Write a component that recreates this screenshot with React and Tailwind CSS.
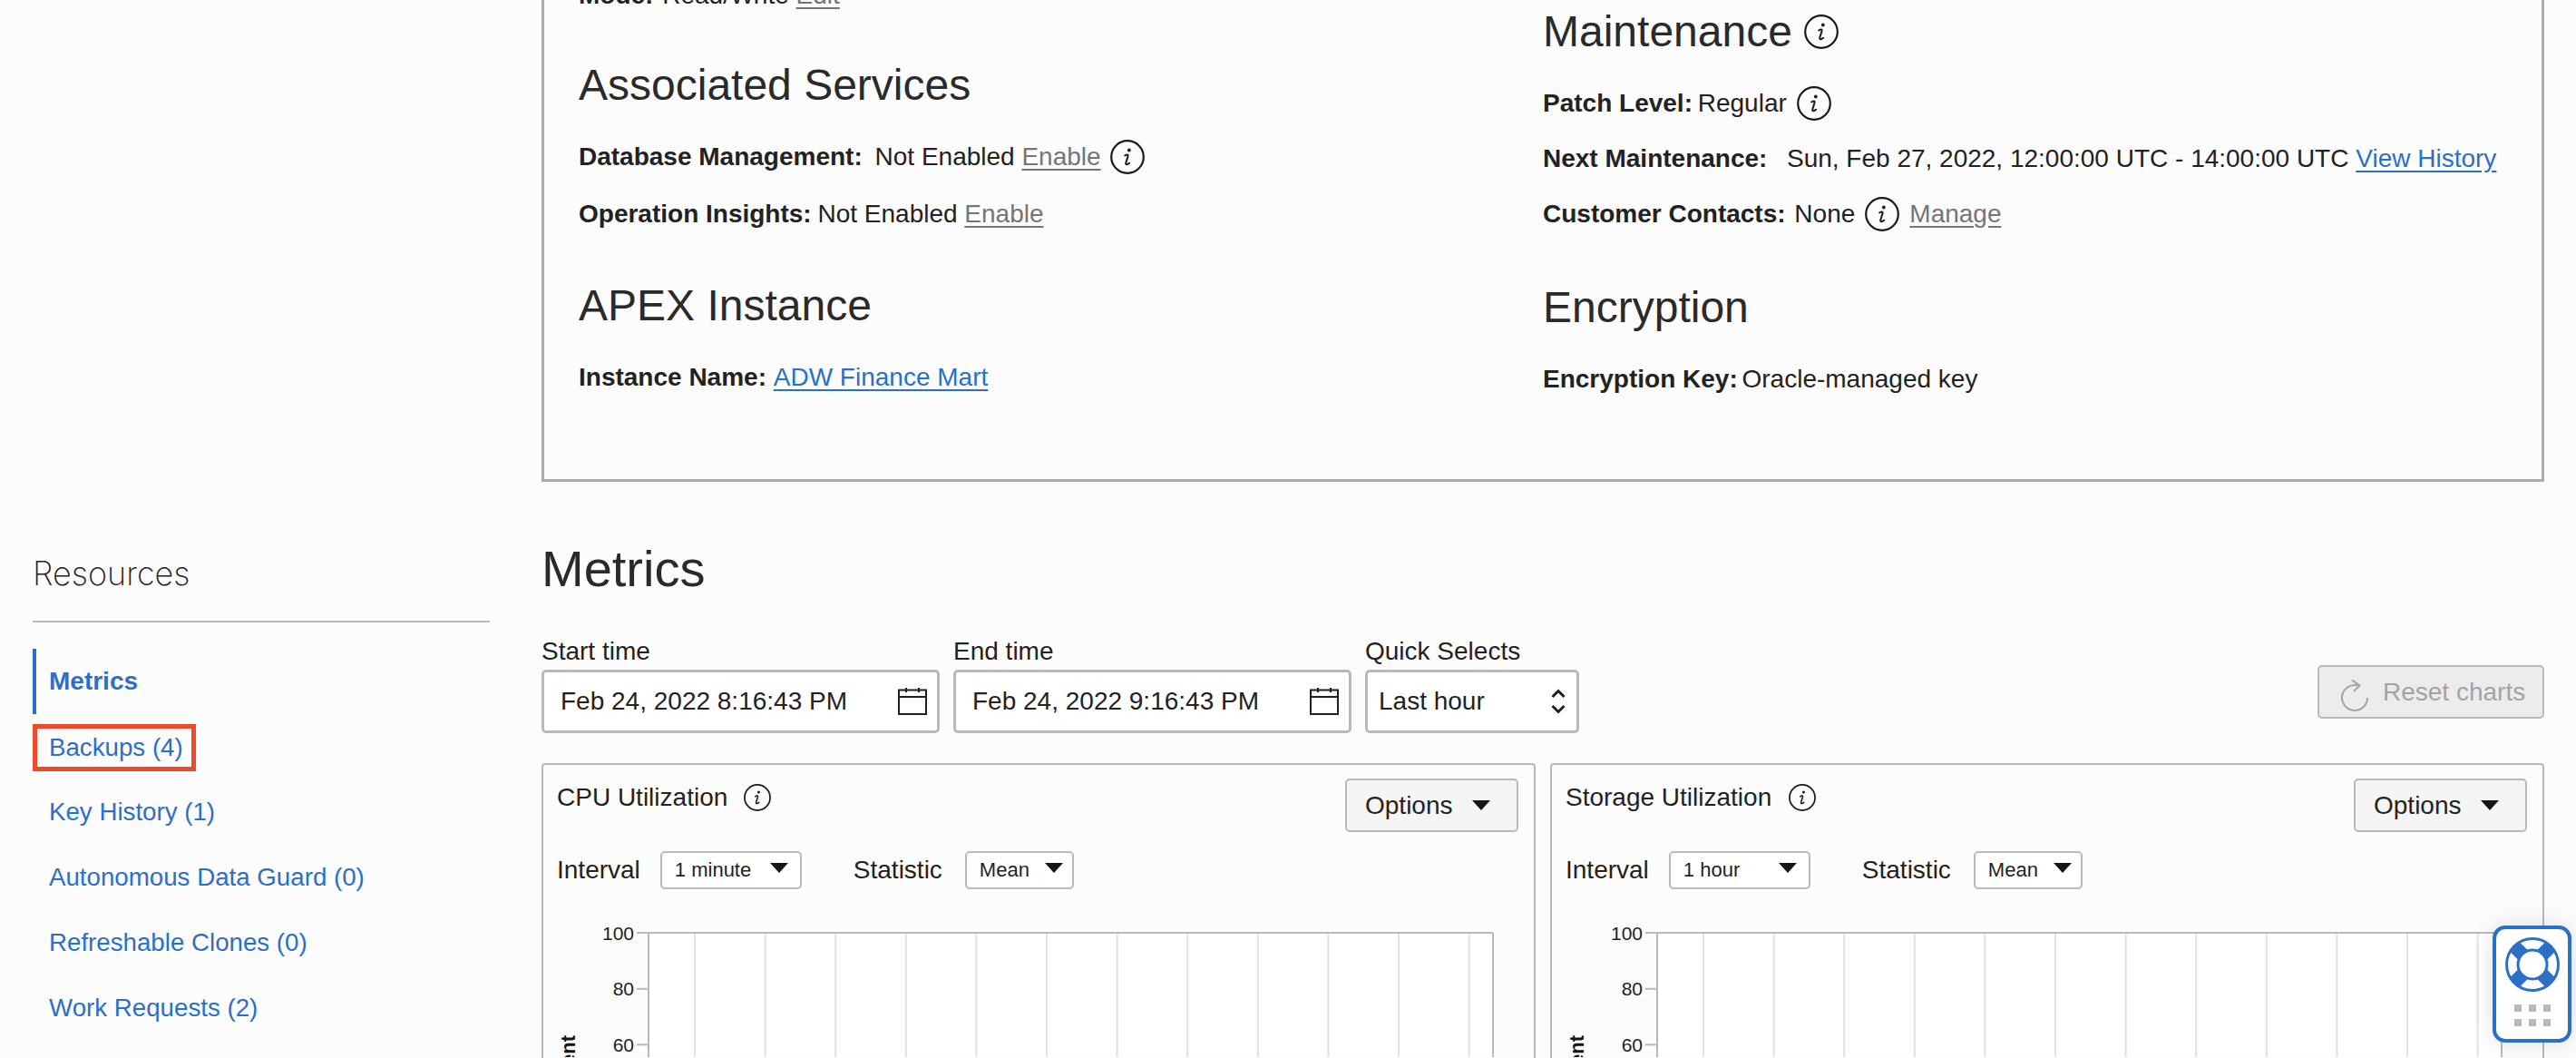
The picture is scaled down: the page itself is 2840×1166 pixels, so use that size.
const ink = "text-[#222222]";

function InfoIcon({ size = 38, className = "" }) {
  return (
    <svg width={size} height={size} viewBox="0 0 38 38" fill="none" className={`shrink-0 ${className}`}>
      <circle cx="19" cy="19" r="17.8" stroke="#1a1a1a" strokeWidth="2.2" />
      <circle cx="20.8" cy="11.5" r="1.9" fill="#1a1a1a" />
      <path d="M16.2 17.5c1.3-1 3-1.6 3.4-.5.5 1.3-2.7 7.7-2.4 9.6.2 1.2 2.200 .6 3.900-.9" stroke="#1a1a1a" strokeWidth="2" strokeLinecap="round" />
    </svg>
  );
}

function Caret({ className = "" }) {
  return (
    <svg width="20" height="11" viewBox="0 0 20 11" className={`shrink-0 ${className}`}>
      <path d="M0 0H20L10 11Z" fill="#161513" />
    </svg>
  );
}

function CalendarIcon() {
  return (
    <svg width="32" height="30" viewBox="0 0 32 30" fill="none" className="shrink-0">
      <path d="M1 2.500H31V29H1Z M1 10H31 M9 0V5 M23 0V5" stroke="#1f1f1f" strokeWidth="2" />
    </svg>
  );
}

function Row({ className = "", children }) {
  return <div className={`flex h-10 items-center whitespace-pre text-[28px] leading-10 ${ink} ${className}`}>{children}</div>;
}

function Heading({ className = "", children }) {
  return <h2 className={`flex h-14 items-center text-[48px] leading-14 font-normal text-[#2a2a2a] ${className}`}>{children}</h2>;
}

function GreyLink({ children }) {
  return <a className="text-[#757575] underline underline-offset-4">{children}</a>;
}

function BlueLink({ children }) {
  return <a className="text-[#2b6fc9] underline underline-offset-4">{children}</a>;
}

function DetailsBox() {
  return (
    <section className="flex h-[531px] overflow-hidden border-r-[3px] border-b-[3px] border-l-[3px] border-[#ababab]">
      <div className="w-[1101px] shrink-0 pl-[38px]">
        <Row className="mt-[-25px]"><b className="mr-[2px]">Mode:</b> Read/Write <GreyLink>Edit</GreyLink></Row>
        <Heading className="mt-[51px]">Associated Services</Heading>
        <Row className="mt-[31px]">
          <b className="mr-[6px]">Database Management:</b> Not Enabled <GreyLink>Enable</GreyLink>
          <InfoIcon className="ml-[10px]" />
        </Row>
        <Row className="mt-[23px]"><b className="mr-[-1px]">Operation Insights:</b> Not Enabled <GreyLink>Enable</GreyLink></Row>
        <Heading className="mt-[53px]">APEX Instance</Heading>
        <Row className="mt-[31px]"><b>Instance Name:</b>{"\u00a0"}<BlueLink>ADW Finance Mart</BlueLink></Row>
      </div>
      <div className="flex-1">
        <Heading className="mt-[7px]">Maintenance<InfoIcon className="ml-[13px]" /></Heading>
        <Row className="mt-[31px]"><b className="mr-[-2px]">Patch Level:</b> Regular<InfoIcon className="ml-[11px]" /></Row>
        <Row className="mt-[21px]"><b className="mr-[6px]">Next Maintenance:</b>{"\u00a0 "}Sun, Feb 27, 2022, 12:00:00 UTC - 14:00:00 UTC <BlueLink>View History</BlueLink></Row>
        <Row className="mt-[21px]"><b className="mr-[2px]">Customer Contacts:</b> None<InfoIcon className="mx-[11px]" /><GreyLink>Manage</GreyLink></Row>
        <Heading className="mt-[55px]">Encryption</Heading>
        <Row className="mt-[31px]"><b className="mr-[-3px]">Encryption Key:</b> Oracle-managed key</Row>
      </div>
    </section>
  );
}

function DateField({ label, value }) {
  return (
    <div className="w-[439px]">
      <div className={`h-8 text-[28px] leading-8 ${ink}`}>{label}</div>
      <div className="mt-1 flex h-[70px] items-center justify-between rounded-[5px] border-[3px] border-[#b6babf] bg-white pr-[11px] pl-[18px]">
        <span className={`text-[28px] ${ink}`}>{value}</span>
        <CalendarIcon />
      </div>
    </div>
  );
}

function QuickSelect() {
  return (
    <div className="w-[236px]">
      <div className={`h-8 text-[28px] leading-8 ${ink}`}>Quick Selects</div>
      <div className="mt-1 flex h-[70px] items-center justify-between rounded-[5px] border-[3px] border-[#b6babf] bg-white pr-[12px] pl-[12px]">
        <span className={`text-[28px] ${ink}`}>Last hour</span>
        <svg width="16" height="28" viewBox="0 0 16 28" fill="none">
          <path d="M1.500 9 8 2.500 14.500 9 M1.500 19 8 25.500 14.500 19" stroke="#1f1f1f" strokeWidth="3" />
        </svg>
      </div>
    </div>
  );
}

function SmallSelect({ value, width, gap }) {
  return (
    <div className={`flex h-[42px] items-center rounded-[5px] border-[2px] border-[#b6babf] bg-white pl-[14px] ${width}`}>
      <span className={`text-[22px] leading-none ${ink} ${gap}`}>{value}</span>
      <Caret className="mb-[5px]" />
    </div>
  );
}

function Chart() {
  const left = 116;
  const top = 14;
  const grid = Array.from({ length: 12 }, (_, i) => left + 51 + i * 77.6);
  const ticks = [[100, 0], [80, 61.800], [60, 123.300]];
  return (
    <svg width="1092" height="151" className="mt-[34px] block" style={{ overflow: "hidden" }}>
      <rect x={left} y={top} width="931" height="200" fill="#ffffff" />
      {grid.map((x) => (
        <line key={x} x1={x} x2={x} y1={top} y2="200" stroke="#e1e1e1" strokeWidth="2" />
      ))}
      <line x1={left} x2={left + 931} y1={top} y2={top} stroke="#b6babf" strokeWidth="2" />
      <line x1={left} x2={left} y1={top} y2="200" stroke="#b6babf" strokeWidth="2" />
      <line x1={left + 931} x2={left + 931} y1={top} y2="200" stroke="#b6babf" strokeWidth="2" />
      {ticks.map(([n, dy]) => (
        <g key={n}>
          <line x1={left - 13} x2={left} y1={top + dy} y2={top + dy} stroke="#b6babf" strokeWidth="2" />
          <text x={left - 16} y={top + dy + 7.500} textAnchor="end" fontSize="21" fill="#222222" fontFamily="'Liberation Sans', Arial, sans-serif">{n}</text>
        </g>
      ))}
      <text transform="translate(35 127) rotate(-90)" textAnchor="end" fontSize="22" fontWeight="700" fill="#161513" fontFamily="'Liberation Sans', Arial, sans-serif">Percent</text>
    </svg>
  );
}

function ChartCard({ title, titleGap, interval, intervalGap }) {
  return (
    <div className="h-[400px] overflow-hidden rounded-[4px] border-2 border-[#b6babf] pt-[15px] pr-[17px]">
      <div className="flex items-start justify-between pl-[15px]">
        <div className={`mt-[6px] flex h-[30px] items-center text-[28px] ${ink}`}>
          {title}
          <InfoIcon size={30} className={titleGap} />
        </div>
        <button className={`flex h-[59px] w-[191px] items-center justify-between rounded-[5px] border-2 border-[#b6babf] bg-[#f5f5f5] pr-[29px] pl-[20px] text-[28px] ${ink}`}>
          Options
          <Caret />
        </button>
      </div>
      <div className="mt-[21px] flex items-center pl-[15px]">
        <span className={`mr-[22px] text-[28px] ${ink}`}>Interval</span>
        <SmallSelect value={interval} width="w-[156px]" gap={intervalGap} />
        <span className={`mr-[25px] ml-[57px] text-[28px] ${ink}`}>Statistic</span>
        <SmallSelect value="Mean" width="w-[120px]" gap="mr-[17px]" />
      </div>
      <Chart />
    </div>
  );
}

function HelpWidget() {
  return (
    <div className="absolute top-[1020px] left-[2748px] flex h-[129px] w-[87px] flex-col items-center rounded-[14px] border-[4px] border-[#2b6fc9] bg-white pt-[9px] shadow-[0_0_24px_rgba(0,0,0,0.12)]">
      <svg width="60" height="60" viewBox="0 0 60 60" fill="none">
        <path d="M10.200 10.200 19.400 19.400 M49.800 10.200 40.600 19.400 M10.200 49.800 19.400 40.600 M49.800 49.800 40.600 40.600" stroke="#2b6fc9" strokeWidth="15" />
        <circle cx="30" cy="30" r="28.500" stroke="#2b6fc9" strokeWidth="3" />
        <circle cx="30" cy="30" r="16" fill="#ffffff" stroke="#2b6fc9" strokeWidth="3" />
      </svg>
      <div className="mt-[14px] grid grid-cols-3 gap-x-2 gap-y-2">
        {[0, 1, 2, 3, 4, 5].map((i) => (
          <span key={i} className="h-2 w-2 bg-[#b6babf]" />
        ))}
      </div>
    </div>
  );
}

const items = ["Key History (1)", "Autonomous Data Guard (0)", "Refreshable Clones (0)", "Work Requests (2)"];

export default function App() {
  return (
    <div className="relative flex h-[1166px] w-[2840px] overflow-hidden bg-[#fcfcfc] font-['Liberation_Sans',Arial,sans-serif]">
      <aside className="w-[597px] shrink-0 pt-[610px] pl-9">
        <h2 className="h-11 font-['Inter',sans-serif] text-[36px] leading-11 font-extralight text-[#222222]">Resources</h2>
        <div className="mt-[30px] h-[2px] w-[504px] bg-[#b6babf]" />
        <ul className="mt-[29px] text-[27.7px] text-[#2b6fc9]">
          <li className="flex h-[72px] items-center border-l-4 border-[#2b6fc9] pl-[14px] text-[28px] font-bold">Metrics</li>
          <li className="flex h-[72px] items-center pt-[1px]">
            <span className="flex h-[52px] items-center border-[5px] border-[#f0492a] pr-[9px] pl-[13px]">Backups (4)</span>
          </li>
          {items.map((t) => (
            <li key={t} className="flex h-[72px] items-center pl-[18px]">{t}</li>
          ))}
        </ul>
      </aside>
      <main className="w-[2208px] shrink-0">
        <DetailsBox />
        <h1 className="mt-[64px] h-16 text-[56px] leading-16 font-normal text-[#2a2a2a]">Metrics</h1>
        <div className="mt-[43px] flex items-start gap-[15px]">
          <DateField label="Start time" value="Feb 24, 2022 8:16:43 PM" />
          <DateField label="End time" value="Feb 24, 2022 9:16:43 PM" />
          <QuickSelect />
          <button className="mt-[31px] ml-auto flex h-[59px] w-[250px] items-center gap-[15px] rounded-[5px] border-2 border-[#b6babf] bg-[#ececec] pl-[24px] text-[28px] text-[#a3a3a3]">
            <svg width="31" height="36" viewBox="0 0 31 36" fill="none" className="mt-[9px] shrink-0">
              <path d="M18 6.300A14 14 0 1 0 29 20" stroke="#a3a3a3" strokeWidth="2" />
              <path d="M12 .5 20.500 6.500 14 13" stroke="#a3a3a3" strokeWidth="2" />
            </svg>
            Reset charts
          </button>
        </div>
        <div className="mt-[33px] grid grid-cols-2 gap-4">
          <ChartCard title="CPU Utilization" titleGap="ml-[18px]" interval="1 minute" intervalGap="mr-[21px]" />
          <ChartCard title="Storage Utilization" titleGap="ml-[19px]" interval="1 hour" intervalGap="mr-[43px]" />
        </div>
      </main>
      <HelpWidget />
    </div>
  );
}
